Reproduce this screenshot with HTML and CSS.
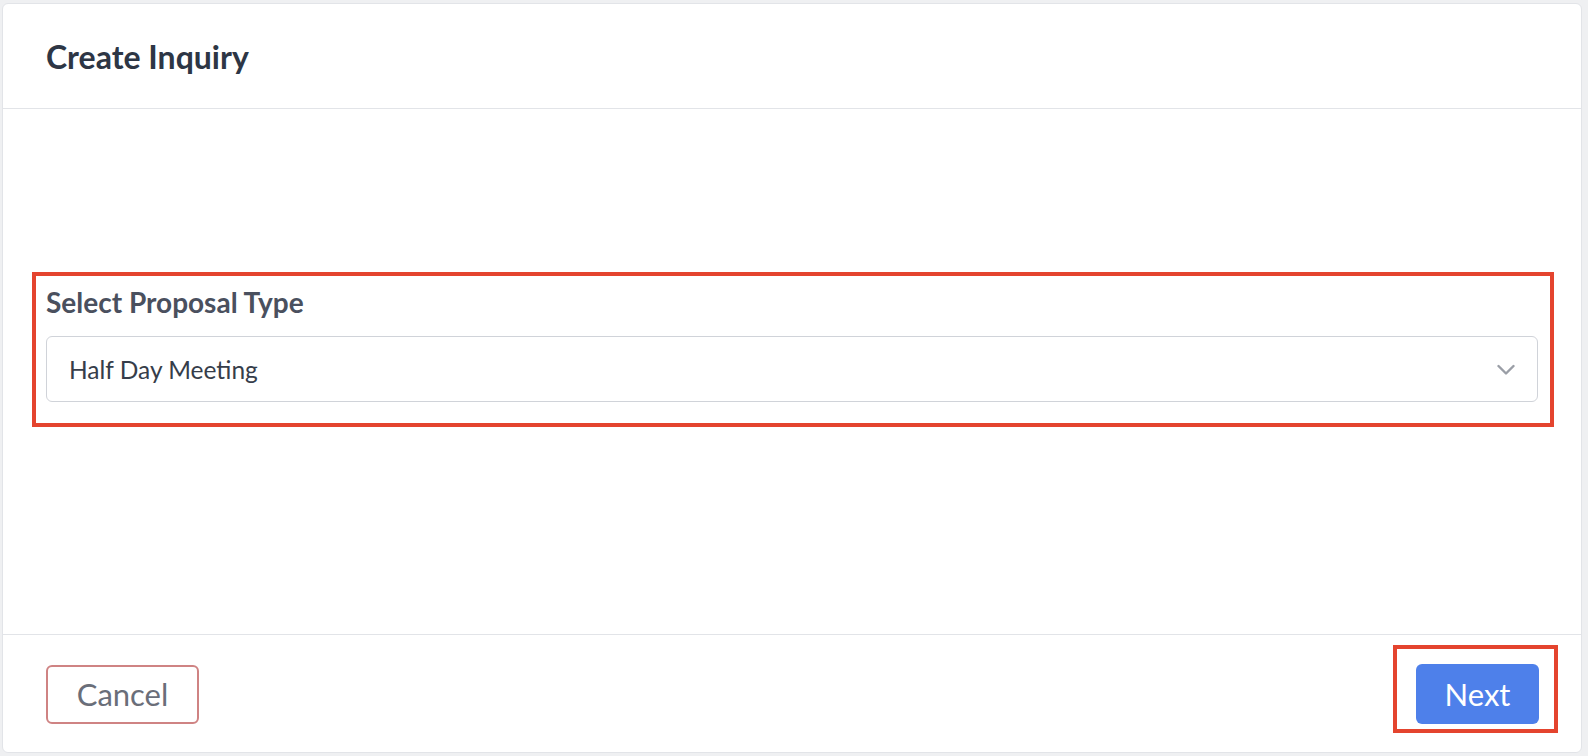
FILE: index.html
```html
<!DOCTYPE html>
<html lang="en">
<head>
    <meta charset="UTF-8">
    <meta name="viewport" content="width=device-width, initial-scale=1.0">
    <title>Create Inquiry</title>
    <link rel="stylesheet" href="styles.css">
</head>
<body>
    <div class="card">
        <div class="card-header">
            <h1>Create Inquiry</h1>
        </div>
        <div class="card-body">
            <div class="highlight-box">
                <label class="field-label" for="proposalType">Select Proposal Type</label>
                <div class="select">
                    <span class="select-value" id="proposalType">Half Day Meeting</span>
                    <svg class="chevron" width="18" height="12" viewBox="0 0 18 12">
                        <path d="M1.5 2 L9 9.5 L16.5 2" fill="none" stroke="#9a9ea6" stroke-width="2.4" stroke-linecap="round" stroke-linejoin="round"/>
                    </svg>
                </div>
            </div>
        </div>
        <div class="card-footer">
            <button class="btn btn-cancel">Cancel</button>
            <span class="mark">
                <button class="btn btn-next">Next</button>
            </span>
        </div>
    </div>
</body>
</html>
```

FILE: styles.css
```css
body {
    margin: 0;
    background-color: #eff0f2;
    font-family: Lato, "Open Sans", sans-serif;
}
.card {
    box-sizing: border-box;
    margin: 3px 6px 0 2px;
    height: 750px;
    background-color: #fff;
    border: 1px solid #e2e4e8;
    border-radius: 6px;
    display: flex;
    flex-direction: column;
}
.card-header {
    padding: 35px 43px 33px;
    border-bottom: 1px solid #e2e4e8;
}
.card-header h1 {
    margin: 0;
    font-size: 32px;
    line-height: 36px;
    font-weight: 700;
    color: #2d3645;
}
.card-body {
    flex: 1;
    padding: 163px 27px 0 29px;
}
.highlight-box {
    border: 4px solid #e4442e;
    padding: 10px 12px 21px 10px;
}
.field-label {
    display: block;
    font-size: 28px;
    line-height: 32px;
    font-weight: 700;
    color: #4a505e;
    margin-bottom: 18px;
}
.select {
    height: 66px;
    box-sizing: border-box;
    border: 1px solid #d0d3d9;
    border-radius: 6px;
    padding: 0 22px 0 22px;
    display: flex;
    align-items: center;
    justify-content: space-between;
}
.select-value {
    font-size: 24.5px;
    color: #363d4a;
}
.chevron {
    margin-top: 2px;
}
.card-footer {
    border-top: 1px solid #e2e4e8;
    padding: 29px 42px 28px 43px;
    display: flex;
    justify-content: space-between;
    align-items: center;
}
.btn {
    font-family: Lato, "Open Sans", sans-serif;
    font-size: 31px;
    border-radius: 6px;
    cursor: pointer;
}
.btn-cancel {
    width: 153px;
    height: 59px;
    background: #fff;
    border: 2px solid #cf8383;
    color: #6a6e79;
}
.mark {
    position: relative;
    display: flex;
}
.mark::after {
    content: "";
    position: absolute;
    top: -19px;
    left: -23px;
    right: -19px;
    bottom: -9px;
    border: 4px solid #e4442e;
}
.btn-next {
    width: 123px;
    height: 60px;
    background: #4e80ea;
    border: none;
    color: #fff;
}
```
